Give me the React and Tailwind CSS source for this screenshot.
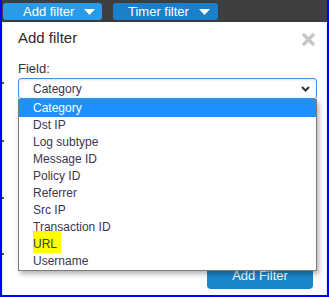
import { useState } from 'react'

const fields = [
  'Category',
  'Dst IP',
  'Log subtype',
  'Message ID',
  'Policy ID',
  'Referrer',
  'Src IP',
  'Transaction ID',
  'URL',
  'Username',
]

function Caret() {
  return (
    <svg width="11" height="6" viewBox="0 0 11 6" className="ml-[10px]">
      <polygon points="0,0 11,0 5.5,6" fill="white" />
    </svg>
  )
}

export default function App() {
  const [selected] = useState('Category')

  return (
    <div
      className="relative w-[329px] h-[297px] overflow-hidden border-l-2 border-r-2 border-b-2 border-[#0000ff] bg-[#f3f3f3]"
      style={{ fontFamily: '"Liberation Sans", Arial, sans-serif' }}
    >
      {/* toolbar */}
      <div className="h-[22px] bg-[#3e3e3e] flex items-start pt-[3px] pl-[1px] gap-[11px]">
        <button className="h-[17px] w-[99px] rounded-[3px] bg-[#2a9be8] text-white text-[13px] leading-[17px] flex items-center pl-[20px]">
          Add filter
          <Caret />
        </button>
        <button className="h-[17px] w-[105px] rounded-[3px] bg-[#1b80c9] text-white text-[13px] leading-[17px] flex items-center pl-[15px]">
          Timer filter
          <Caret />
        </button>
      </div>

      {/* ticks of the page behind */}
      <div className="absolute left-0 top-[82px] w-[2px] h-[2px] bg-[#555]" />
      <div className="absolute left-0 top-[140px] w-[2px] h-[2px] bg-[#555]" />
      <div className="absolute left-0 top-[197px] w-[2px] h-[2px] bg-[#555]" />
      <div className="absolute left-0 top-[253px] w-[2px] h-[2px] bg-[#555]" />

      {/* modal */}
      <div className="mx-[1px] h-[280px] bg-white rounded-t-[5px] pl-[15px] pr-[9px] pt-[6px] shadow-[0_0_2px_rgba(0,0,0,0.15)]">
        <div className="flex items-center justify-between">
          <h2 className="text-[15px] leading-[20px] text-[#2b2b2b]">Add filter</h2>
          <svg width="13" height="13" viewBox="0 0 13 13" className="mr-[2px] mt-[2px]">
            <path d="M2 2 L11 11 M11 2 L2 11" stroke="#c6c6c6" strokeWidth="3.4" strokeLinecap="round" />
          </svg>
        </div>

        <div className="mt-[13px] text-[13px] leading-[16px] text-[#333]">Field:</div>

        <div className="relative mt-[1px]">
          <div className="h-[21px] rounded-[3px] border border-[#4b8fd6] flex items-center justify-between pl-[14px] pr-[6px] text-[12px] text-[#3d3550] shadow-[inset_0_1px_2px_rgba(0,0,0,0.12)]">
            {selected}
            <svg width="9" height="6" viewBox="0 0 9 6">
              <polyline points="1,1 4.5,4.5 8,1" fill="none" stroke="#333" strokeWidth="2" />
            </svg>
          </div>

          {/* dropdown list */}
          <ul className="absolute left-0 right-0 top-full z-10 bg-white border border-[#7d7d7d] shadow-[2px_3px_5px_rgba(0,0,0,0.3)]">
            {fields.map((f) => (
              <li
                key={f}
                className={
                  f === selected
                    ? 'h-[17px] leading-[17px] pl-[14px] text-[12px] bg-[#1e90ff] text-white'
                    : 'h-[17px] leading-[17px] pl-[14px] text-[12px] text-[#3d3550]'
                }
              >
                {f === 'URL' ? (
                  <span className="relative inline-block">
                    <span className="absolute left-0 top-[-5px] w-[28px] h-[22px] bg-[#ffff00]" />
                    <span className="relative">{f}</span>
                  </span>
                ) : (
                  f
                )}
              </li>
            ))}
          </ul>
        </div>

        {/* content hidden behind the list */}
        <div className="mt-[84px] h-[17px] w-[120px] border-l-2 border-[#c8c8c8]" />

        <div className="mt-[63px] flex justify-end pr-[4px]">
          <button className="h-[26px] w-[106px] rounded-[4px] bg-[#1b86c9] text-white text-[13px]">
            Add Filter
          </button>
        </div>
      </div>
    </div>
  )
}
